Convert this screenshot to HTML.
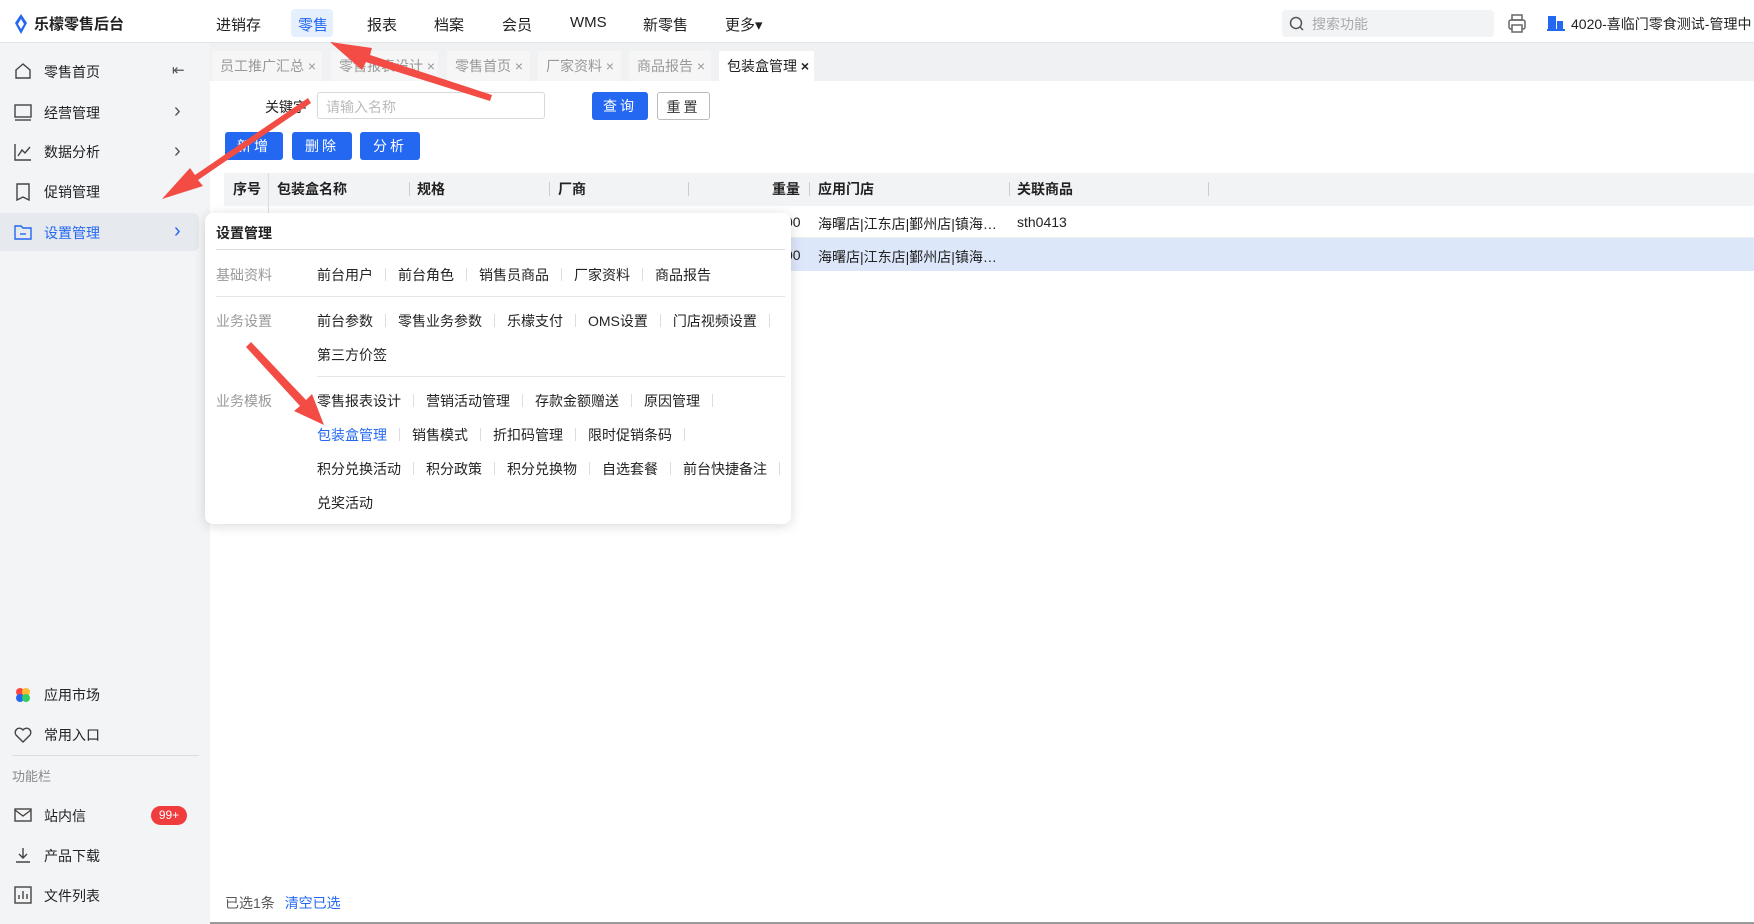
<!DOCTYPE html>
<html><head><meta charset="utf-8"><style>
*{margin:0;padding:0;box-sizing:border-box}
body{width:1754px;height:924px;overflow:hidden;background:#fff;font-family:"Liberation Sans","Noto Sans CJK SC",sans-serif;font-size:14px;color:#222;position:relative}
.a{position:absolute;white-space:nowrap}
.hdr{left:0;top:0;width:1754px;height:43px;border-bottom:1px solid #e3e4e6;background:#fff}
.side{left:0;top:43px;width:210px;height:881px;background:#f3f4f6}
.tabs{left:210px;top:43px;width:1544px;height:38px;background:#f0f1f3}
.tab{position:absolute;top:8px;height:30px;line-height:30px;background:#f6f6f7;color:#999;padding-left:8px;font-size:14px}
.btn{position:absolute;height:28px;line-height:28px;text-align:center;color:#fff;background:#2468f2;border-radius:3px;font-size:14px;letter-spacing:3px}
.th{position:absolute;top:173px;height:33px;line-height:33px;font-weight:bold}
.dv{position:absolute;top:182px;width:1px;height:14px;background:#ccc}
.pop{left:205px;top:213px;width:586px;height:311px;background:#fff;border-radius:8px;box-shadow:0 2px 12px rgba(0,0,0,.15)}
.pl{color:#999}
.it{position:absolute;font-size:14px}
.sep{display:inline-block;width:1px;height:13px;background:#ddd;margin:0 12px;vertical-align:-1px}
.chev{position:absolute;left:174px;font-size:20px;color:#555;line-height:20px}
</style></head><body>
<div class="a hdr"></div>
<svg class="a" style="left:14px;top:14px" width="14" height="20" viewBox="0 0 14 20"><path d="M7 0L13 9L7 20L1 9Z" fill="#2468f2"/><path d="M7 5L10 10L7 15L4 10Z" fill="#fff"/></svg>
<div class="a" style="left:34px;top:13px;font-weight:bold;font-size:15px">乐檬零售后台</div>
<div class="a" style="left:291px;top:9px;width:42px;height:28px;background:#e6effd;border-radius:4px"></div>
<div class="a" style="left:216px;top:14px;font-size:15px">进销存</div>
<div class="a" style="left:298px;top:14px;font-size:15px;color:#2468f2">零售</div>
<div class="a" style="left:367px;top:14px;font-size:15px">报表</div>
<div class="a" style="left:434px;top:14px;font-size:15px">档案</div>
<div class="a" style="left:502px;top:14px;font-size:15px">会员</div>
<div class="a" style="left:570px;top:14px;font-size:15px">WMS</div>
<div class="a" style="left:643px;top:14px;font-size:15px">新零售</div>
<div class="a" style="left:725px;top:14px;font-size:15px">更多▾</div>
<div class="a" style="left:1282px;top:10px;width:212px;height:27px;background:#f2f3f5;border-radius:4px"></div>
<svg class="a" style="left:1289px;top:16px" width="16" height="16"><circle cx="7" cy="7" r="5.5" fill="none" stroke="#555" stroke-width="1.5"/><path d="M11 11L14 14" stroke="#555" stroke-width="1.5"/></svg>
<div class="a" style="left:1312px;top:14px;color:#aaa">搜索功能</div>
<svg class="a" style="left:1508px;top:14px" width="18" height="20"><rect x="4" y="1" width="10" height="5" fill="none" stroke="#666" stroke-width="1.5"/><rect x="1" y="6" width="16" height="9" rx="2" fill="none" stroke="#666" stroke-width="1.5"/><rect x="4" y="11" width="10" height="7" fill="#fff" stroke="#666" stroke-width="1.5"/></svg>
<svg class="a" style="left:1547px;top:15px" width="18" height="16"><rect x="1" y="1" width="8" height="13" fill="#2468f2"/><rect x="10" y="6" width="6" height="8" fill="#2468f2"/><rect x="0" y="14" width="18" height="2" fill="#2468f2"/></svg>
<div class="a" style="left:1571px;top:14px;font-size:14px">4020-喜临门零食测试-管理中</div>

<div class="a side"></div>
<div class="a" style="left:0;top:213px;width:199px;height:38px;background:#e6e9ee;border-radius:0 6px 6px 0"></div>
<svg class="a" style="left:14px;top:62px" width="18" height="18"><path d="M2 8L9 2L16 8V16H2Z" fill="none" stroke="#444" stroke-width="1.4"/></svg>
<div class="a" style="left:44px;top:62px">零售首页</div><div class="a" style="left:172px;top:61px;color:#555;font-size:15px">⇤</div>
<svg class="a" style="left:14px;top:103px" width="18" height="18"><rect x="1" y="2" width="16" height="12" fill="none" stroke="#444" stroke-width="1.4"/><path d="M1 17H17" stroke="#444" stroke-width="1.4"/></svg>
<div class="a" style="left:44px;top:103px">经营管理</div><div class="chev" style="top:101px">›</div>
<svg class="a" style="left:14px;top:143px" width="18" height="18"><path d="M1 1V17H17M4 13L8 7L11 10L16 4" fill="none" stroke="#444" stroke-width="1.4"/></svg>
<div class="a" style="left:44px;top:142px">数据分析</div><div class="chev" style="top:141px">›</div>
<svg class="a" style="left:14px;top:183px" width="18" height="18"><path d="M3 1H15V17L9 14L3 17Z" fill="none" stroke="#444" stroke-width="1.4"/></svg>
<div class="a" style="left:44px;top:182px">促销管理</div>
<svg class="a" style="left:14px;top:223px" width="18" height="18"><path d="M1 3H7L9 5H17V16H1Z" fill="none" stroke="#2468f2" stroke-width="1.4"/><path d="M6 11H12" stroke="#2468f2" stroke-width="1.4"/></svg>
<div class="a" style="left:44px;top:223px;color:#2468f2">设置管理</div><div class="chev" style="top:221px;color:#2468f2">›</div>
<svg class="a" style="left:14px;top:686px" width="18" height="18"><circle cx="6" cy="6" r="4" fill="#f44"/><circle cx="12" cy="6" r="4" fill="#fb3"/><circle cx="6" cy="12" r="4" fill="#2468f2"/><circle cx="12" cy="12" r="4" fill="#3c6"/></svg>
<div class="a" style="left:44px;top:685px">应用市场</div>
<svg class="a" style="left:14px;top:726px" width="18" height="18"><path d="M9 16L2 9A4 4 0 0 1 9 4A4 4 0 0 1 16 9Z" fill="none" stroke="#444" stroke-width="1.4"/></svg>
<div class="a" style="left:44px;top:725px">常用入口</div>
<div class="a" style="left:12px;top:755px;width:187px;height:1px;background:#ddd"></div>
<div class="a" style="left:12px;top:766px;color:#888;font-size:13px">功能栏</div>
<svg class="a" style="left:14px;top:806px" width="18" height="18"><rect x="1" y="3" width="16" height="12" fill="none" stroke="#444" stroke-width="1.4"/><path d="M1 4L9 10L17 4" fill="none" stroke="#444" stroke-width="1.4"/></svg>
<div class="a" style="left:44px;top:806px">站内信</div>
<div class="a" style="left:151px;top:806px;width:36px;height:19px;background:#f03c3c;color:#fff;border-radius:10px;font-size:12px;text-align:center;line-height:19px">99+</div>
<svg class="a" style="left:14px;top:846px" width="18" height="18"><path d="M9 2V12M5 8L9 12L13 8M2 16H16" fill="none" stroke="#444" stroke-width="1.4"/></svg>
<div class="a" style="left:44px;top:846px">产品下载</div>
<svg class="a" style="left:14px;top:886px" width="18" height="18"><rect x="1" y="1" width="16" height="16" fill="none" stroke="#444" stroke-width="1.4"/><path d="M5 13V9M9 13V5M13 13V8" stroke="#444" stroke-width="1.4"/></svg>
<div class="a" style="left:44px;top:886px">文件列表</div>

<div class="a tabs">
<div class="tab" style="left:2px;width:110px">员工推广汇总 ×</div>
<div class="tab" style="left:121px;width:107px">零售报表设计 ×</div>
<div class="tab" style="left:237px;width:83px">零售首页 ×</div>
<div class="tab" style="left:328px;width:83px">厂家资料 ×</div>
<div class="tab" style="left:419px;width:82px">商品报告 ×</div>
<div class="tab" style="left:509px;width:95px;background:#fff;color:#222">包装盒管理 <b>×</b></div>
</div>

<div class="a" style="left:265px;top:97px">关键字</div>
<div class="a" style="left:317px;top:92px;width:228px;height:27px;border:1px solid #d9d9d9;border-radius:3px;padding:4px 8px;color:#bbb">请输入名称</div>
<div class="btn" style="left:592px;top:92px;width:56px;height:28px">查询</div>
<div class="btn" style="left:657px;top:92px;width:53px;height:28px;background:#fff;color:#333;border:1px solid #bbb">重置</div>
<div class="btn" style="left:225px;top:132px;width:58px">新增</div>
<div class="btn" style="left:292px;top:132px;width:60px">删除</div>
<div class="btn" style="left:360px;top:132px;width:60px">分析</div>

<div class="a" style="left:224px;top:173px;width:1530px;height:33px;background:#f2f3f5"></div>
<div class="th" style="left:233px">序号</div>
<div class="a" style="left:268px;top:173px;width:1px;height:98px;background:#ddd"></div>
<div class="th" style="left:277px">包装盒名称</div>
<div class="dv" style="left:409px"></div><div class="th" style="left:417px">规格</div>
<div class="dv" style="left:549px"></div><div class="th" style="left:558px">厂商</div>
<div class="dv" style="left:688px"></div><div class="th" style="left:772px">重量</div>
<div class="dv" style="left:809px"></div><div class="th" style="left:818px">应用门店</div>
<div class="dv" style="left:1009px"></div><div class="th" style="left:1017px">关联商品</div>
<div class="dv" style="left:1208px"></div>
<div class="a" style="left:224px;top:206px;width:1530px;height:32px;border-bottom:1px solid #eee"></div>
<div class="a" style="left:224px;top:238px;width:1530px;height:33px;background:#dde7fa"></div>
<div class="a" style="left:785px;top:214px">00</div><div class="a" style="left:818px;top:214px">海曙店|江东店|鄞州店|镇海…</div><div class="a" style="left:1017px;top:214px">sth0413</div>
<div class="a" style="left:785px;top:247px">00</div><div class="a" style="left:818px;top:247px">海曙店|江东店|鄞州店|镇海…</div>

<div class="a" style="left:225px;top:893px;color:#555">已选1条 <span style="color:#2468f2;margin-left:6px">清空已选</span></div>
<div class="a" style="left:210px;top:922px;width:1544px;height:2px;background:#999"></div>

<div class="a pop">
<div class="it" style="left:11px;top:10px;font-weight:bold">设置管理</div>
<div class="a" style="left:11px;top:36px;width:569px;height:1px;background:#ddd"></div>
<div class="it pl" style="left:11px;top:52px">基础资料</div>
<div class="it" style="left:112px;top:52px">前台用户<i class="sep"></i>前台角色<i class="sep"></i>销售员商品<i class="sep"></i>厂家资料<i class="sep"></i>商品报告</div>
<div class="a" style="left:11px;top:83px;width:569px;height:1px;background:#e6e6e6"></div>
<div class="it pl" style="left:11px;top:98px">业务设置</div>
<div class="it" style="left:112px;top:98px">前台参数<i class="sep"></i>零售业务参数<i class="sep"></i>乐檬支付<i class="sep"></i>OMS设置<i class="sep"></i>门店视频设置<i class="sep"></i></div>
<div class="it" style="left:112px;top:132px">第三方价签</div>
<div class="a" style="left:112px;top:163px;width:468px;height:1px;background:#e6e6e6"></div>
<div class="it pl" style="left:11px;top:178px">业务模板</div>
<div class="it" style="left:112px;top:178px">零售报表设计<i class="sep"></i>营销活动管理<i class="sep"></i>存款金额赠送<i class="sep"></i>原因管理<i class="sep"></i></div>
<div class="it" style="left:112px;top:212px"><span style="color:#2468f2">包装盒管理</span><i class="sep"></i>销售模式<i class="sep"></i>折扣码管理<i class="sep"></i>限时促销条码<i class="sep"></i></div>
<div class="it" style="left:112px;top:246px">积分兑换活动<i class="sep"></i>积分政策<i class="sep"></i>积分兑换物<i class="sep"></i>自选套餐<i class="sep"></i>前台快捷备注<i class="sep"></i></div>
<div class="it" style="left:112px;top:280px">兑奖活动</div>
</div>

<svg class="a" style="left:0;top:0" width="1754" height="924">
<g fill="#f24c45">
<path d="M492 95L370 55L372 48L330 42L362 70L366 62L490 101Z"/>
<path d="M308 98L195 175L190 168L162 199L203 186L198 180L311 103Z"/>
<path d="M246 347L300 406L294 411L324 425L312 394L306 400L251 342Z"/>
</g>
</svg>
</body></html>
